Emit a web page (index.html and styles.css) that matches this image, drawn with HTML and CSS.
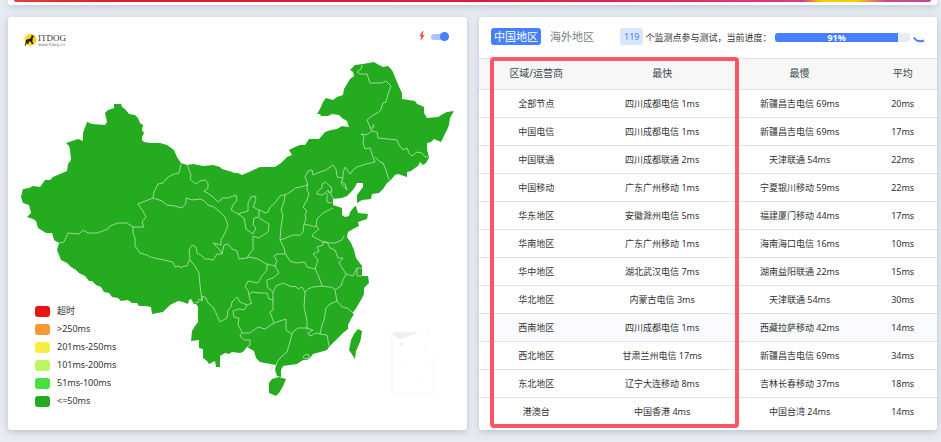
FILE: index.html
```html
<!DOCTYPE html>
<html lang="zh-CN">
<head>
<meta charset="utf-8">
<meta name="viewport" content="width=device-width, initial-scale=1">
<title>ITDOG</title>
<link rel="stylesheet" href="styles.css">
</head>
<body>
<div class="banner"><div class="banner-strip"></div></div>
<main class="layout">
  <section class="panel map-panel">
    <svg class="map" viewBox="8 17 459 413" role="img" aria-label="中国地区">
      <g class="logo">
        <circle cx="30.5" cy="39.7" r="6" fill="#fbd51b"/>
        <path fill="#222" d="M32 34.5l.7 1.2 1.4.5-.3 1-1 .3-.1 2.4-.5 1.5.9 1.1.2 1.4h-1.4l-1.5-2.3-1.5-.1-.5 1.5.1 1h-1.3l-.3-1.2-1.2 3h-1l1-3.2.2-2 1.5-1.3 2.6-.5 1.2-2z"/>
        <text class="logo-name" x="38" y="41">ITDOG</text>
        <text class="logo-site" x="38" y="46">www.itdog.cn</text>
      </g>
      <g class="land">
        <path d="M114 104L121 104 122 107 125 109 129 114 135 115 138 118 140 123 143 125 142 130 144 133 142 137 142 140 144 142 150 143 160 143 167 145 174 150 177 157 181 163 187 165 193 164 203 166 213 165 220 167 222 169 229 171 235 173 238 173 242 175 249 172 260 167 275 167 281 163 287 157 292 155 289 150 295 147 300 145 305 145 309 139 319 139 325 132 331 130 337 129 342 126 349 127 347 121 342 118 339 115 332 114 328 116 321 116 320 114 317 114 321 107 323 102 326 98 333 100 337 97 343 95 344 89 350 79 354 76 353 72 350 70 355 65 363 64 374 62 379 65 383 67 388 66 391 69 393 72 395 77 397 82 400 89 402 93 402 99 409 100 415 101 417 104 420 105 424 107 424 113 427 118 438 117 443 114 447 112 454 111 450 118 449 125 447 130 444 136 441 142 434 139 431 142 427 143 427 149 429 158 426 163 423 165 420 162 418 166 415 168 411 171 407 172 407 177 398 174 395 175 390 181 387 183 383 189 379 193 372 194 371 199 362 200 357 203 357 195 363 187 363 183 357 183 355 187 352 191 347 196 342 198 333 199 333 205 342 208 342 215 345 217 349 216 350 212 354 207 356 206 358 213 368 214 367 219 358 222 359 226 355 228 348 232 347 237 351 243 354 250 356 258 362 266 362 276 368 276 369 283 364 288 364 294 361 300 358 305 355 310 352 313 354 314 351 319 348 325 348 329 343 333 338 338 333 343 329 347 327 350 324 351 313 354 310 358 307 360 303 360 297 364 283 366 281 370 281 377 277 376 275 370 276 365 265 363 260 362 256 358 254 351 247 347 243 352 240 353 232 352 229 354 225 353 220 356 220 367 216 367 215 361 209 364 207 361 203 358 203 349 199 348 199 340 191 341 192 331 195 326 198 322 198 307 196 304 194 304 191 299 189 300 188 304 183 302 178 301 170 305 163 312 152 314 151 307 145 306 139 306 137 303 132 303 128 300 121 301 118 298 112 297 109 293 104 292 101 287 96 285 92 281 89 281 85 276 79 273 76 270 71 267 67 263 61 260 57 250 59 243 54 240 52 233 46 233 38 228 36 221 33 219 27 217 31 213 29 205 23 203 21 197 23 189 29 188 33 186 40 187 45 180 50 180 53 177 60 174 67 171 68 164 71 160 70 149 69 146 66 143 78 139 83 141 83 133 87 122 92 124 105 125 107 122 105 113 108 110 114 108Z"/>
        <path d="M272 379L279 377 286 379 284 384 282 388 279 393 276 396 269 393 269 383Z"/>
        <path d="M358 329L362 331 361 338 360 342 356 351 355 359 349 350 350 345 351 340 354 334Z"/>
      </g>
      <g class="borders">
        <path d="M59 243L64 242 68 233 79 234 83 230 88 233 97 233 108 229 110 226 118 223 127 223 133 227 144 227 142 222 146 217 143 211 140 207 138 204 153 198 154 192 158 184 163 183 168 177 174 174 179 173 181 164"/>
        <path d="M133 227L133 233 135 238 135 246 140 253 147 255 150 257 159 259 165 260 168 261 173 262 175 267 179 266 181 268 184 266 187 266 190 258 189 250 192 245 196 247 197 253 202 256 205 259 209 259 213 260 217 254 222 254 220 250 213 243 221 245 221 240 225 233 228 225 225 217 220 212 214 207 208 205 203 200 200 199 192 200 186 198 186 203 182 208 175 206 167 205 162 201 153 198"/>
        <path d="M222 254L224 245 228 244 232 249 237 251 239 259 247 258 250 253 253 250 253 236 258 238 265 234 268 232 269 224 259 218"/>
        <path d="M187 164L191 175 190 179 196 184 200 181 205 180 208 183 208 188 204 191 212 196 218 202 221 200 222 198 228 198 236 195 237 200 233 205 231 210 238 214 248 211 248 203 251 197 255 196 256 200 253 207 259 210 259 217 254 218 253 225 256 228 253 234 246 229 244 218 238 214"/>
        <path d="M259 210L262 211 265 213 268 212 270 207 274 204 280 196 287 194 293 190 295 188 300 187 308 185 305 177 308 171 312 170 313 175 320 172 326 170 333 165 336 169 337 177 343 178 341 183 347 190"/>
        <path d="M285 195L284 202 281 210 283 215 281 227 280 240 284 248 285 253 290 261 296 263 305 262 307 267 315 269 318 260 313 254 319 251 317 247 323 245 323 242 312 236 314 233 319 229 316 226 317 219 323 213 333 208"/>
        <path d="M280 240L286 238 293 235 300 235 303 232 304 224 316 227M304 224L306 219 305 214 307 211 303 207 307 200 309 194 307 190 307 184"/>
        <path d="M247 258L250 257 258 259 263 262 267 264 275 266 279 273 273 278 267 280 267 284 268 288 273 292 276 286 283 283 292 287 295 286 298 289 302 287 305 292 308 289 313 287 322 286 319 277 315 269"/>
        <path d="M275 266L277 261 274 256 277 254 285 254"/>
        <path d="M267 264L267 270 262 276 258 283 253 282 248 281 245 287 248 290 249 295 252 292 260 293 267 293 269 299 273 300M249 295L250 300 252 303 247 305 240 302 237 297 232 302 231 307 228 310 227 318 220 322 216 313 213 307 208 303 206 298 203 296 202 301 200 285 199 273 195 266 190 260"/>
        <path d="M202 301L199 299 198 303 195 302M247 305L244 310 239 309 233 311 234 317 239 318 238 325 241 330 242 333 250 333 258 327 265 329 274 323 286 319 286 330 292 334 290 342 287 352 281 357 277 362 276 366"/>
        <path d="M242 333L240 336 244 340 250 340 250 345 247 347M273 292L273 310 270 312 274 323M292 334L294 331 298 328 307 328 307 320 304 307 305 292"/>
        <path d="M306 328L313 330 308 333 310 336 316 333 320 334 327 335 329 346M320 334L322 325 324 320 326 308 330 304 337 301 335 290 341 286 343 280 346 274 339 263 343 258 338 258 335 250 330 248 327 242 323 242"/>
        <path d="M322 286L328 287 331 287 335 289M337 301L342 307 347 308 352 312M346 274L353 276 357 268 362 268M357 268L357 276 362 276M323 242L330 243 335 243 342 240 344 236"/>
        <path d="M345 167L343 173 343 178M345 167L350 174 354 169 357 167 366 164 375 162 373 157 370 148 365 149 363 143 364 137 361 134 366 135 372 131 370 127 367 120 372 116 380 111 381 109 383 103 386 102 388 94 391 86 386 81 382 83 370 83 367 74 360 74 357 72 361 69 362 65"/>
        <path d="M372 131L377 132 378 138 388 139 397 140 399 145 403 150 407 148 409 153 412 156 417 152 422 153 425 157 428 157M375 157L380 162 383 163 386 170 388 177 390 181M372 125L374 125 373 128 370 128"/>
        <path d="M317 192L322 188 322 184 325 182 331 187 332 191 329 193 328 190 323 195 317 194ZM327 193L327 202 332 203M331 191L331 195 334 199M341 181L345 184 347 190M303 357L306 354 309 355 309 358 305 359ZM272 365L272 370"/>
      </g>
      <g class="inset">
        <path d="M392 333L394 332 418 332 410 336 400 339 395 337ZM427 332h3l-1 3zM400 343l3-1-1 4-2 0z"/>
        <path class="inset-frame" d="M392 332V394H434V357M432 338l-1 1M426 348l-1 5M425 363l-1 3M419 375l-2 3M402 364l-2 3"/>
      </g>
    </svg>
    <div class="map-tools">
      <svg class="bolt" viewBox="0 0 6 10" aria-hidden="true"><path d="M3.6 0L.3 5.2h1.8L1.5 10 5.7 4H3.5L4.4 0z"/></svg>
      <input class="switch" type="checkbox" checked aria-label="快速">
    </div>
    <ul class="legend">
      <li><i class="swatch timeout"></i>超时</li>
      <li><i class="swatch over"></i>&gt;250ms</li>
      <li><i class="swatch slow"></i>201ms-250ms</li>
      <li><i class="swatch medium"></i>101ms-200ms</li>
      <li><i class="swatch good"></i>51ms-100ms</li>
      <li><i class="swatch fast"></i>&lt;=50ms</li>
    </ul>
  </section>

  <section class="panel stats-panel">
    <header class="toolbar">
      <button class="tab active" type="button">中国地区</button>
      <button class="tab" type="button">海外地区</button>
      <span class="count">119</span>
      <span class="status">个监测点参与测试，当前进度：</span>
      <div class="progress" role="progressbar" aria-valuenow="91" aria-valuemin="0" aria-valuemax="100"><div class="progress-fill" style="width:91%">91%</div></div>
      <svg class="spinner" viewBox="0 0 12 12" aria-hidden="true"><path d="M.8 5.500C3 9 7 10 11 8.500" fill="none" stroke="#4680ff" stroke-width="2"/></svg>
    </header>
    <div class="table-wrap">
      <table>
        <colgroup><col class="c-region"><col class="c-fast"><col class="c-slow"><col class="c-avg"></colgroup>
        <thead><tr><th>区域/运营商</th><th>最快</th><th>最慢</th><th>平均</th></tr></thead>
        <tbody>
          <tr><td>全部节点</td><td>四川成都电信 1ms</td><td>新疆昌吉电信 69ms</td><td>20ms</td></tr>
          <tr><td>中国电信</td><td>四川成都电信 1ms</td><td>新疆昌吉电信 69ms</td><td>17ms</td></tr>
          <tr><td>中国联通</td><td>四川成都联通 2ms</td><td>天津联通 54ms</td><td>22ms</td></tr>
          <tr><td>中国移动</td><td>广东广州移动 1ms</td><td>宁夏银川移动 59ms</td><td>22ms</td></tr>
          <tr><td>华东地区</td><td>安徽滁州电信 5ms</td><td>福建厦门移动 44ms</td><td>17ms</td></tr>
          <tr><td>华南地区</td><td>广东广州移动 1ms</td><td>海南海口电信 16ms</td><td>10ms</td></tr>
          <tr><td>华中地区</td><td>湖北武汉电信 7ms</td><td>湖南益阳联通 22ms</td><td>15ms</td></tr>
          <tr><td>华北地区</td><td>内蒙古电信 3ms</td><td>天津联通 54ms</td><td>30ms</td></tr>
          <tr class="current"><td>西南地区</td><td>四川成都电信 1ms</td><td>西藏拉萨移动 42ms</td><td>14ms</td></tr>
          <tr><td>西北地区</td><td>甘肃兰州电信 17ms</td><td>新疆昌吉电信 69ms</td><td>34ms</td></tr>
          <tr><td>东北地区</td><td>辽宁大连移动 8ms</td><td>吉林长春移动 37ms</td><td>18ms</td></tr>
          <tr><td>港澳台</td><td>中国香港 4ms</td><td>中国台湾 24ms</td><td>14ms</td></tr>
        </tbody>
      </table>
      <div class="highlight"></div>
    </div>
  </section>
</main>
</body>
</html>
```
FILE: styles.css
```css
* { box-sizing: border-box; }

body {
  margin: 0;
  overflow: hidden;
  background: #e8ecf2;
  color: #333;
  font: 9px/12px "Noto Sans", "Noto Sans CJK SC", sans-serif;
}

.banner,
.panel {
  background: #fff;
  border-radius: 3px;
  box-shadow: 0 2px 7px rgba(110, 130, 155, .4);
}

.banner {
  margin: 0 4px 12px 8px;
  padding: 0 6px 3px;
  border-radius: 0 0 3px 3px;
}

.banner-strip {
  height: 2px;
  border-radius: 0 0 4px 4px;
  background: linear-gradient(90deg, #e5403a 0, #e52a20 6%, #e01a30 12%, #e01a38 50%, #ea2a68 75%, #d83c88 86%, #fbc800 88%, #fbc800 92%, #d04a90 95%, #b8489a 100%);
}

.layout {
  display: grid;
  grid-template-columns: 459fr 458fr;
  gap: 12px;
  padding: 0 4px 12px 8px;
}

.map-panel { position: relative; }

.map {
  display: block;
  width: 100%;
}

.logo-name {
  fill: #333;
  font: 9px "Liberation Serif", serif;
}

.logo-site {
  fill: #777;
  font: 4px "DejaVu Sans", sans-serif;
}

.land { fill: #25ab20; }

.borders {
  fill: none;
  stroke: #a5e09f;
  stroke-width: .9;
  stroke-linejoin: round;
}

.inset { fill: #efefef; }

.inset-frame {
  fill: none;
  stroke: #f5f5f5;
}

.map-tools {
  position: absolute;
  top: 14px;
  right: 18px;
  display: flex;
  align-items: center;
  gap: 6px;
}

.bolt {
  width: 6px;
  height: 10px;
  fill: #fa4f5b;
}

.switch {
  position: relative;
  appearance: none;
  width: 18px;
  height: 6px;
  margin: 2px 0 0;
  border-radius: 3px;
  background: #a9c3ff;
}

.switch::after {
  content: "";
  position: absolute;
  top: -2px;
  right: 0;
  width: 9px;
  height: 9px;
  border-radius: 50%;
  background: #4680ff;
}

.legend {
  position: absolute;
  left: 27px;
  bottom: 23px;
  display: grid;
  gap: 6px;
  margin: 0;
  padding: 0;
  list-style: none;
}

.legend li {
  display: flex;
  align-items: center;
  gap: 7px;
}

.swatch {
  width: 15px;
  height: 11px;
  border-radius: 3px;
}

.timeout { background: #e81613; }
.over { background: #f89833; }
.slow { background: #f6ed44; }
.medium { background: #bef663; }
.good { background: #44e040; }
.fast { background: #25ab20; }

.toolbar {
  display: flex;
  align-items: center;
  height: 41px;
  padding: 0 12px;
  white-space: nowrap;
}

.tab {
  margin: 0 8px 2px 0;
  padding: 0 3px;
  border: 0;
  border-radius: 3px;
  background: none;
  color: #777f88;
  font: 11px/17px "Noto Sans", "Noto Sans CJK SC", sans-serif;
}

.tab.active {
  margin-right: 6px;
  background: #4680ff;
  color: #fff;
}

.count {
  margin: 0 2px 2px 15px;
  padding: 0 4px;
  border-radius: 3px;
  background: #dae5ff;
  color: #4680ff;
  font-size: 9px;
  line-height: 17px;
}

.progress {
  flex: 1;
  height: 9px;
  margin: 0 0 1px 4px;
  border-radius: 3px;
  background: #e9ecf2;
}

.progress-fill {
  height: 100%;
  border-radius: 3px 0 0 3px;
  background: #4680ff;
  color: #fff;
  font-weight: 700;
  line-height: 10px;
  text-align: center;
}

.spinner {
  width: 12px;
  height: 12px;
  margin-left: 3px;
}

.table-wrap { position: relative; }

table {
  width: 100%;
  border-collapse: collapse;
  table-layout: fixed;
  text-align: center;
}

.c-region { width: 25%; }
.c-fast { width: 30%; }
.c-slow { width: 30%; }
.c-avg { width: 15%; }

th {
  height: 31px;
  padding: 0 0 3px;
  border-top: 1px solid #dee4ea;
  background: #f7f7f7;
  color: #37474f;
  font-size: 10px;
  font-weight: 400;
}

td {
  height: 28px;
  padding: 0;
  border-top: 1px solid #dee4ea;
}

.current { background: #f9fbff; }

.highlight {
  position: absolute;
  top: -1px;
  bottom: -2px;
  left: 11px;
  width: 249px;
  border: 4px solid #fc5565;
  border-radius: 4px;
  pointer-events: none;
}
```
